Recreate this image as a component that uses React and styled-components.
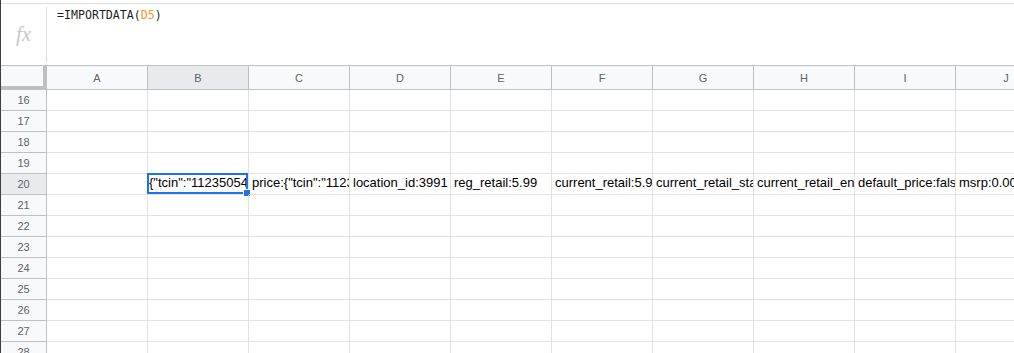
import styled, { createGlobalStyle } from "styled-components";

const columns = ["A", "B", "C", "D", "E", "F", "G", "H", "I", "J"];
const rows = [16, 17, 18, 19, 20, 21, 22, 23, 24, 25, 26, 27, 28];

const data = {
    20: {
        B: '{"tcin":"11235054","price":{"tcin":"11235054"',
        C: 'price:{"tcin":"11235054"',
        D: "location_id:3991",
        E: "reg_retail:5.99",
        F: "current_retail:5.99",
        G: "current_retail_start_timestamp:2021-01-01",
        H: "current_retail_end_timestamp:9999-12-31",
        I: "default_price:false",
        J: "msrp:0.00",
    },
};

const selected = { row: 20, col: "B" };

function App() {
    return (
        <>
            <GlobalStyle />
            <Page>
                <FormulaBar>
                    <FxLabel>fx</FxLabel>
                    <Divider />
                    <FormulaText>
                        =IMPORTDATA(<Ref>D5</Ref>)
                    </FormulaText>
                </FormulaBar>
                <Sheet>
                    <Corner />
                    {columns.map((c) => (
                        <ColHeader key={c} $active={c === selected.col}>
                            {c}
                        </ColHeader>
                    ))}
                    {rows.map((r) => (
                        <Row key={r} r={r} />
                    ))}
                </Sheet>
            </Page>
        </>
    );
}

function Row({ r }) {
    const values = data[r] || {};
    return (
        <>
            <RowHeader $active={r === selected.row}>{r}</RowHeader>
            {columns.map((c) => {
                const isSel = r === selected.row && c === selected.col;
                return (
                    <Cell key={c}>
                        <CellText $selected={isSel}>{values[c]}</CellText>
                        {isSel && (
                            <Selection>
                                <Handle />
                            </Selection>
                        )}
                    </Cell>
                );
            })}
        </>
    );
}

const GlobalStyle = createGlobalStyle`
    html, body {
        margin: 0;
        background: #ffffff;
        overflow: hidden;
    }
`;

const Page = styled.div`
    box-sizing: border-box;
    height: 100vh;
    padding-top: 3px;
    border-left: 1px solid #3c4043;
    overflow: hidden;
    background: #ffffff;
`;

const FormulaBar = styled.div`
    display: flex;
    box-sizing: border-box;
    height: 63px;
    border-top: 1px solid #e1e1e1;
    border-bottom: 1px solid #c0c0c0;
`;

const FxLabel = styled.div`
    display: flex;
    align-items: center;
    justify-content: center;
    width: 45px;
    padding-bottom: 1px;

    font-family: "Liberation Serif", serif;
    font-style: italic;
    font-size: 21px;
    color: #c8c8c8;
`;

const Divider = styled.div`
    width: 1px;
    margin: 3px 0;
    background: #dadce0;
`;

const FormulaText = styled.div`
    padding: 4px 10px;

    font-family: "DejaVu Sans Mono", "Liberation Mono", monospace;
    font-size: 11.6px;
    line-height: 14px;
    color: #1f1f1f;
`;

const Ref = styled.span`
    color: #f7981d;
`;

const Sheet = styled.div`
    display: grid;
    grid-template-columns: 46px repeat(10, 101px);
    grid-template-rows: 24px;
    grid-auto-rows: 21px;
`;

const Corner = styled.div`
    box-sizing: border-box;
    background: #f8f9fa;
    border-right: 4px solid #c0c0c0;
    border-bottom: 4px solid #c0c0c0;
`;

const ColHeader = styled.div`
    display: flex;
    align-items: center;
    justify-content: center;
    box-sizing: border-box;
    border-right: 1px solid #c0c0c0;
    border-bottom: 1px solid #c0c0c0;
    background: ${(p) => (p.$active ? "#e8eaed" : "#f8f9fa")};

    font-family: "Liberation Sans", Arial, sans-serif;
    font-size: 11px;
    color: #5f6368;
`;

const RowHeader = styled.div`
    display: flex;
    align-items: center;
    justify-content: center;
    box-sizing: border-box;
    border-right: 1px solid #c0c0c0;
    border-bottom: 1px solid #c0c0c0;
    background: ${(p) => (p.$active ? "#e8eaed" : "#f8f9fa")};

    font-family: "Liberation Sans", Arial, sans-serif;
    font-size: 11px;
    color: #5f6368;
`;

const Cell = styled.div`
    position: relative;
    box-sizing: border-box;
    border-right: 1px solid #e2e2e2;
    border-bottom: 1px solid #e2e2e2;
`;

const CellText = styled.div`
    height: 100%;
    padding: 0 0 0 ${(p) => (p.$selected ? "1px" : "3px")};
    overflow: hidden;
    white-space: nowrap;

    font-family: "Liberation Sans", Arial, sans-serif;
    font-size: 13px;
    line-height: 18px;
    color: #000000;
`;

const Selection = styled.div`
    position: absolute;
    top: -1px;
    left: -1px;
    right: 0;
    bottom: 0;
    border: 2px solid #1a73e8;
    pointer-events: none;
`;

const Handle = styled.div`
    position: absolute;
    right: -5px;
    bottom: -5px;
    width: 6px;
    height: 6px;
    background: #1a73e8;
    border: 1px solid #ffffff;
`;

export default App;
